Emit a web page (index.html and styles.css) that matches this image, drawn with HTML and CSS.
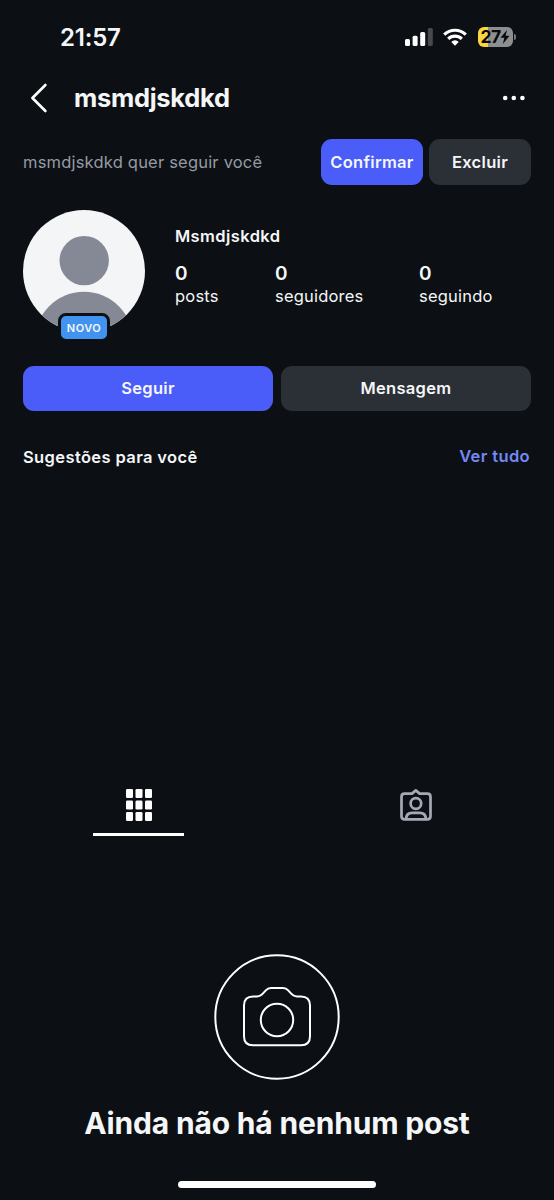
FILE: index.html
```html
<!DOCTYPE html>
<html lang="pt-BR">
<head>
<meta charset="utf-8">
<title>msmdjskdkd</title>
<link rel="stylesheet" href="styles.css">
</head>
<body>
<div class="screen">
  <div class="status">
    <span class="time">21:57</span>
    <div class="status-icons">
      <svg class="signal" width="28" height="18" viewBox="0 0 28 18">
        <g fill="#fff">
          <rect x="0" y="11" width="5" height="7" rx="1.5"/>
          <rect x="7.6" y="7.7" width="5" height="10.3" rx="1.5"/>
          <rect x="15.2" y="4" width="5" height="14" rx="1.5"/>
        </g>
        <rect x="22.8" y="0" width="5" height="18" rx="1.5" fill="#47494d"/>
      </svg>
      <svg class="wifi" width="24" height="18" viewBox="0 0 24 18" fill="none" stroke="#fff" stroke-width="3.1">
        <path d="M1.2 6.7a15.2 15.2 0 0 1 21.6 0"/>
        <path d="M5.2 10.9a9.6 9.6 0 0 1 13.6 0"/>
        <path d="M12 17.7l-3.7-3.8a5.2 5.2 0 0 1 7.4 0z" fill="#fff" stroke="none"/>
      </svg>
      <div class="battery">
        <span class="battery-level">27</span>
        <svg class="bolt" width="10" height="14" viewBox="0 0 10 14"><path d="M7 0L0.5 7.8H4.3L2.9 14L9.5 5.8H5.6Z" fill="#08090b"/></svg>
      </div>
      <span class="battery-tip"></span>
    </div>
  </div>

  <header class="header">
    <svg class="back" width="18" height="30" viewBox="0 0 18 30" fill="none" stroke="#fff" stroke-width="2.6" stroke-linecap="round" stroke-linejoin="round"><path d="M15.4 2L2.4 15L15.4 28"/></svg>
    <h1 class="title">msmdjskdkd</h1>
    <svg class="more" width="24" height="6" viewBox="0 0 24 6" fill="#fff"><circle cx="3.2" cy="3" r="2.3"/><circle cx="11.8" cy="3" r="2.3"/><circle cx="20.4" cy="3" r="2.3"/></svg>
  </header>

  <section class="request">
    <p class="request-text">msmdjskdkd quer seguir você</p>
    <button class="btn primary">Confirmar</button>
    <button class="btn">Excluir</button>
  </section>

  <section class="profile">
    <div class="avatar">
      <svg width="122" height="122" viewBox="0 0 122 122">
        <defs><clipPath id="disc"><circle cx="61" cy="61" r="61"/></clipPath></defs>
        <g clip-path="url(#disc)">
          <rect width="122" height="122" fill="#f3f5f7"/>
          <circle cx="61.2" cy="50.6" r="24.7" fill="#858995"/>
          <circle cx="61" cy="131" r="49.2" fill="#858995"/>
        </g>
      </svg>
      <span class="badge">NOVO</span>
    </div>
    <div class="info">
      <h2 class="name">Msmdjskdkd</h2>
      <div class="stats">
        <div class="stat"><strong>0</strong><span>posts</span></div>
        <div class="stat"><strong>0</strong><span>seguidores</span></div>
        <div class="stat"><strong>0</strong><span>seguindo</span></div>
      </div>
    </div>
  </section>

  <section class="actions">
    <button class="btn primary">Seguir</button>
    <button class="btn">Mensagem</button>
  </section>

  <section class="suggestions">
    <h3 class="suggest-title">Sugestões para você</h3>
    <a class="see-all">Ver tudo</a>
  </section>

  <nav class="tabs">
    <div class="tab active">
      <svg width="26" height="32" viewBox="0 0 26 32" fill="#fff">
        <rect x="0" y="0" width="7" height="9" rx="1.3"/><rect x="9.5" y="0" width="7" height="9" rx="1.3"/><rect x="19" y="0" width="7" height="9" rx="1.3"/>
        <rect x="0" y="11.5" width="7" height="9" rx="1.3"/><rect x="9.5" y="11.5" width="7" height="9" rx="1.3"/><rect x="19" y="11.5" width="7" height="9" rx="1.3"/>
        <rect x="0" y="23" width="7" height="9" rx="1.3"/><rect x="9.5" y="23" width="7" height="9" rx="1.3"/><rect x="19" y="23" width="7" height="9" rx="1.3"/>
      </svg>
    </div>
    <div class="tab">
      <svg width="32" height="32" viewBox="0 0 32 32" fill="none" stroke="#a5a8b5" stroke-width="2.7" stroke-linecap="round" stroke-linejoin="round">
        <path d="M4.6 4.6H12L15.8 1.4L19.6 4.6H27.4Q30.5 4.6 30.5 7.7V27.2Q30.5 30.3 27.4 30.3H4.6Q1.5 30.3 1.5 27.2V7.7Q1.5 4.6 4.6 4.6Z"/>
        <circle cx="15.9" cy="14.5" r="5.3"/>
        <path d="M6.2 30C6.2 26 8.6 23.9 12.2 23.9H19.6C23.2 23.9 25.8 26 25.8 30"/>
      </svg>
    </div>
  </nav>

  <section class="empty">
    <svg width="126" height="126" viewBox="0 0 126 126" fill="none" stroke="#fff" stroke-width="2">
      <circle cx="63" cy="63" r="61.7"/>
      <path d="M39 42.5H43C46.2 42.5 48 40.8 50.2 38.2L51.8 36.3Q53.8 34 57 34H69Q72.2 34 74.2 36.3L75.8 38.2C78 40.8 79.8 42.5 83 42.5H87Q96 42.5 96 51.5V82.3Q96 91.3 87 91.3H39Q30 91.3 30 82.3V51.5Q30 42.5 39 42.5Z"/>
      <circle cx="63" cy="66" r="16.2"/>
    </svg>
    <p class="empty-title">Ainda não há nenhum post</p>
  </section>
  <div class="home-bar"></div>
</div>
</body>
</html>
```
FILE: styles.css
```css
* { box-sizing: border-box; }
body { margin: 0; background: #0c1014; color: #f5f6f8; font-family: Inter, "Liberation Sans", sans-serif; }
h1, h2, h3, p { margin: 0; white-space: nowrap; }
svg { display: block; flex: none; }
.screen { width: 554px; height: 1200px; display: flex; flex-direction: column; overflow: hidden; }
.status { height: 74px; padding: 0 38px 0 60px; display: flex; justify-content: space-between; align-items: center; }
.time { padding-top: 2px; font-size: 24px; font-weight: 600; line-height: 30px; letter-spacing: -0.2px; }
.status-icons { display: flex; align-items: center; }
.wifi { margin-left: 10px; }
.battery { width: 35px; height: 20px; margin-left: 11px; border-radius: 6px; background: linear-gradient(90deg, #f9d63f 10px, #8d8e91 10px); display: flex; align-items: center; justify-content: center; color: #08090b; }
.battery-level { font-size: 17.5px; line-height: 20px; font-weight: 700; letter-spacing: -0.7px; }
.battery-tip { width: 2px; height: 6px; margin-left: 1px; border-radius: 0 2px 2px 0; background: #77797c; }
.header { height: 48px; padding: 0 28px 0 30px; display: flex; align-items: center; }
.title { margin-left: 26px; font-size: 25.5px; line-height: 32px; font-weight: 700; letter-spacing: -0.3px; }
.more { margin-left: auto; }
.request { height: 46px; margin-top: 17px; padding: 0 23px; display: flex; gap: 6px; }
.request-text { flex: 1; line-height: 47px; font-size: 16.5px; letter-spacing: 0.2px; color: #969aa4; }
.btn { width: 102px; height: 46px; padding: 0; border: 0; border-radius: 11px; background: #2b2f36; color: #f5f6f8; font-family: inherit; font-size: 16.5px; font-weight: 600; letter-spacing: 0.3px; line-height: 46px; white-space: nowrap; display: flex; justify-content: center; }
.primary { background: #4a5df9; }
.profile { margin-top: 25px; padding-left: 23px; height: 132px; display: flex; }
.avatar { position: relative; width: 122px; height: 122px; }
.badge { position: absolute; left: 35px; top: 103px; width: 52px; height: 29px; border: 3px solid #0c1014; border-radius: 8px; background: #4193ef; font-size: 11px; line-height: 24px; text-align: center; font-weight: 600; letter-spacing: 0.5px; }
.info { margin-left: 30px; padding-top: 15px; }
.name { font-size: 16.5px; line-height: 22px; font-weight: 600; letter-spacing: 0.4px; }
.stats { margin-top: 15px; display: grid; grid-template-columns: 100px 144px 110px; }
.stat { display: flex; flex-direction: column; align-items: flex-start; font-size: 16.5px; letter-spacing: 0.2px; line-height: 22px; }
.stat strong { font-size: 19px; font-weight: 600; line-height: 23px; }
.actions { margin-top: 24px; padding: 0 23px; display: flex; gap: 8px; }
.actions .btn { flex: 1; height: 45px; line-height: 45px; }
.suggestions { margin-top: 34px; padding: 0 24px 0 23px; height: 24px; display: flex; justify-content: space-between; }
.suggest-title { font-size: 16.5px; line-height: 24px; font-weight: 600; letter-spacing: 0.38px; }
.see-all { font-size: 16.5px; line-height: 23px; font-weight: 600; letter-spacing: 0.38px; color: #7488f5; }
.tabs { margin-top: 320px; display: grid; grid-template-columns: 1fr 1fr; justify-items: center; }
.tab { width: 91px; height: 47px; display: flex; justify-content: center; }
.active { border-bottom: 3px solid #fff; }
.empty { margin-top: 118px; display: flex; flex-direction: column; align-items: center; }
.empty-title { margin-top: 24px; font-size: 30px; line-height: 38px; font-weight: 700; letter-spacing: -0.18px; }
.home-bar { width: 198px; height: 7px; margin: 39px auto 0; border-radius: 4px; background: #fff; }
```
